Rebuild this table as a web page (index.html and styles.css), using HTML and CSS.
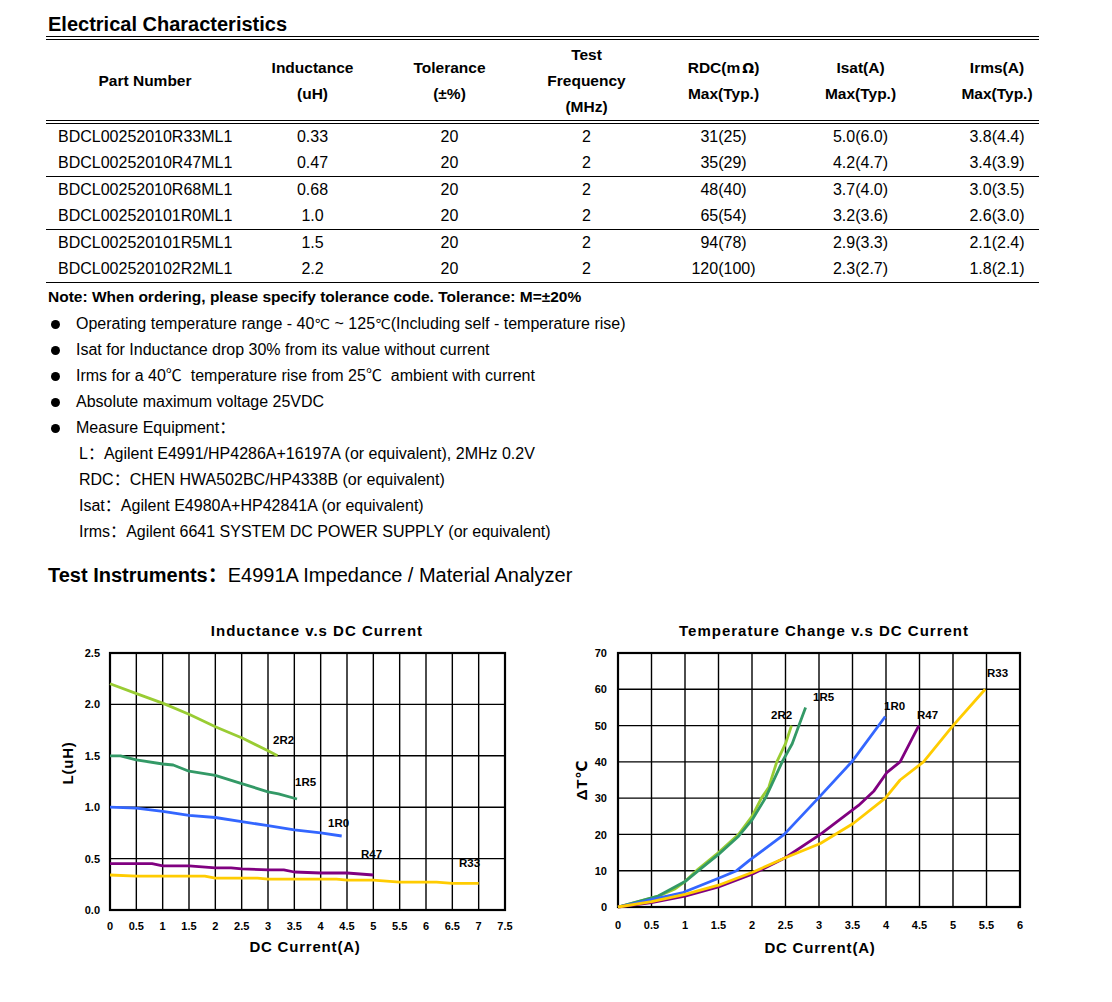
FILE: index.html
```html
<!DOCTYPE html>
<html>
<head>
<meta charset="utf-8">
<link rel="stylesheet" href="styles.css">
</head>
<body>
<div class="page">
  <h1 class="title">Electrical Characteristics</h1>
  <table class="spec">
    <colgroup>
      <col class="c-part"><col class="c-mid"><col class="c-mid"><col class="c-mid"><col class="c-mid"><col class="c-mid"><col class="c-last">
    </colgroup>
    <thead>
      <tr>
        <th>Part Number</th>
        <th>Inductance<br>(uH)</th>
        <th>Tolerance<br>(±%)</th>
        <th>Test<br>Frequency<br>(MHz)</th>
        <th>RDC(m<span class="omega">Ω</span>)<br>Max(Typ.)</th>
        <th>Isat(A)<br>Max(Typ.)</th>
        <th class="last">Irms(A)<br>Max(Typ.)</th>
      </tr>
    </thead>
    <tbody>
      <tr><td class="pn">BDCL00252010R33ML1</td><td>0.33</td><td>20</td><td>2</td><td>31(25)</td><td>5.0(6.0)</td><td class="last">3.8(4.4)</td></tr>
      <tr class="sep"><td class="pn">BDCL00252010R47ML1</td><td>0.47</td><td>20</td><td>2</td><td>35(29)</td><td>4.2(4.7)</td><td class="last">3.4(3.9)</td></tr>
      <tr><td class="pn">BDCL00252010R68ML1</td><td>0.68</td><td>20</td><td>2</td><td>48(40)</td><td>3.7(4.0)</td><td class="last">3.0(3.5)</td></tr>
      <tr class="sep"><td class="pn">BDCL002520101R0ML1</td><td>1.0</td><td>20</td><td>2</td><td>65(54)</td><td>3.2(3.6)</td><td class="last">2.6(3.0)</td></tr>
      <tr><td class="pn">BDCL002520101R5ML1</td><td>1.5</td><td>20</td><td>2</td><td>94(78)</td><td>2.9(3.3)</td><td class="last">2.1(2.4)</td></tr>
      <tr class="sep"><td class="pn">BDCL002520102R2ML1</td><td>2.2</td><td>20</td><td>2</td><td>120(100)</td><td>2.3(2.7)</td><td class="last">1.8(2.1)</td></tr>
    </tbody>
  </table>

  <p class="note">Note: When ordering, please specify tolerance code. Tolerance: M=±20%</p>
  <ul class="bullets">
    <li><span class="dot"></span><span>Operating temperature range - 40<span class="deg">℃</span> ~ 125<span class="deg">℃</span>(Including self - temperature rise)</span></li>
    <li><span class="dot"></span><span>Isat for Inductance drop 30% from its value without current</span></li>
    <li><span class="dot"></span><span>Irms for a 40<span class="cjk">℃</span>&nbsp; temperature rise from 25<span class="cjk">℃</span>&nbsp; ambient with current</span></li>
    <li><span class="dot"></span><span>Absolute maximum voltage 25VDC</span></li>
    <li><span class="dot"></span><span>Measure Equipment<span class="cjk">：</span></span></li>
  </ul>
  <ul class="equip">
    <li>L<span class="cjk">：</span>Agilent E4991/HP4286A+16197A (or equivalent), 2MHz 0.2V</li>
    <li>RDC<span class="cjk">：</span>CHEN HWA502BC/HP4338B (or equivalent)</li>
    <li>Isat<span class="cjk">：</span>Agilent E4980A+HP42841A (or equivalent)</li>
    <li>Irms<span class="cjk">：</span>Agilent 6641 SYSTEM DC POWER SUPPLY (or equivalent)</li>
  </ul>

  <h2 class="instr"><b>Test Instruments<span class="cjk strong">：</span></b>E4991A Impedance / Material Analyzer</h2>

  <div class="charts">
    <svg class="chart-l" width="500" height="345" viewBox="46 615 500 345" xmlns="http://www.w3.org/2000/svg">
      <text class="ctitle" x="317" y="636" text-anchor="middle">Inductance v.s DC Current</text>
      <g class="grid">
        <line x1="136.33" y1="653" x2="136.33" y2="910"/>
        <line x1="162.67" y1="653" x2="162.67" y2="910"/>
        <line x1="189" y1="653" x2="189" y2="910"/>
        <line x1="215.33" y1="653" x2="215.33" y2="910"/>
        <line x1="241.67" y1="653" x2="241.67" y2="910"/>
        <line x1="268" y1="653" x2="268" y2="910"/>
        <line x1="294.33" y1="653" x2="294.33" y2="910"/>
        <line x1="320.67" y1="653" x2="320.67" y2="910"/>
        <line x1="347" y1="653" x2="347" y2="910"/>
        <line x1="373.33" y1="653" x2="373.33" y2="910"/>
        <line x1="399.67" y1="653" x2="399.67" y2="910"/>
        <line x1="426" y1="653" x2="426" y2="910"/>
        <line x1="452.33" y1="653" x2="452.33" y2="910"/>
        <line x1="478.67" y1="653" x2="478.67" y2="910"/>
        <line x1="110" y1="704.4" x2="505" y2="704.4"/>
        <line x1="110" y1="755.8" x2="505" y2="755.8"/>
        <line x1="110" y1="807.2" x2="505" y2="807.2"/>
        <line x1="110" y1="858.6" x2="505" y2="858.6"/>
      </g>
      <rect class="frame" x="110" y="653" width="395" height="257"/>
      <g class="ytick" text-anchor="end">
        <text x="100" y="657">2.5</text>
        <text x="100" y="708">2.0</text>
        <text x="100" y="760">1.5</text>
        <text x="100" y="811">1.0</text>
        <text x="100" y="863">0.5</text>
        <text x="100" y="914">0.0</text>
      </g>
      <g class="xtick" text-anchor="middle">
        <text x="110" y="930">0</text>
        <text x="136.33" y="930">0.5</text>
        <text x="162.67" y="930">1</text>
        <text x="189" y="930">1.5</text>
        <text x="215.33" y="930">2</text>
        <text x="241.67" y="930">2.5</text>
        <text x="268" y="930">3</text>
        <text x="294.33" y="930">3.5</text>
        <text x="320.67" y="930">4</text>
        <text x="347" y="930">4.5</text>
        <text x="373.33" y="930">5</text>
        <text x="399.67" y="930">5.5</text>
        <text x="426" y="930">6</text>
        <text x="452.33" y="930">6.5</text>
        <text x="478.67" y="930">7</text>
        <text x="505" y="930">7.5</text>
      </g>
      <text class="atitle" x="305" y="952" text-anchor="middle">DC Current(A)</text>
      <text class="atitle" x="68" y="768" text-anchor="middle" transform="rotate(-90 68 763)">L(uH)</text>
      <g class="curves">
        <polyline stroke="#99cc33" points="110,683.8 137.9,694.1 163.2,703.4 190.1,714.7 215.9,727 242.7,738.3 268,750.7 277.5,755.8"/>
        <polyline stroke="#339966" points="110,755.8 120.5,755.8 136.3,759.9 162.7,764 173.2,765 189,771.2 215.3,775.3 241.7,783.6 268,791.8 278.5,793.8 297,799"/>
        <polyline stroke="#3366ff" points="110,807.2 136.3,808.2 162.7,811.3 189,815.4 215.3,817.5 241.7,821.6 268,825.7 294.3,829.8 320.7,832.9 341.7,836"/>
        <polyline stroke="#800080" points="110,863.7 152.1,863.7 162.7,865.8 189,865.8 215.3,867.9 231.1,867.9 241.7,868.9 268,869.9 283.8,869.9 294.3,872 320.7,873 347,873 373.3,875"/>
        <polyline stroke="#ffcc00" points="110,875 136.3,876.1 204.8,876.1 215.3,878.1 257.5,878.1 268,879.2 336.5,879.2 347,880.2 373.3,880.2 399.7,882.2 436.5,882.2 452.3,883.3 478.7,883.3"/>
      </g>
      <g class="clabel">
        <text x="273" y="744">2R2</text>
        <text x="295" y="786">1R5</text>
        <text x="328" y="827">1R0</text>
        <text x="361" y="858">R47</text>
        <text x="459" y="867">R33</text>
      </g>
    </svg>

    <svg class="chart-r" width="520" height="345" viewBox="546 615 520 345" xmlns="http://www.w3.org/2000/svg">
      <text class="ctitle" x="824" y="636" text-anchor="middle">Temperature Change v.s DC Current</text>
      <g class="grid">
        <line x1="651.5" y1="653" x2="651.5" y2="907"/>
        <line x1="685" y1="653" x2="685" y2="907"/>
        <line x1="718.5" y1="653" x2="718.5" y2="907"/>
        <line x1="752" y1="653" x2="752" y2="907"/>
        <line x1="785.5" y1="653" x2="785.5" y2="907"/>
        <line x1="819" y1="653" x2="819" y2="907"/>
        <line x1="852.5" y1="653" x2="852.5" y2="907"/>
        <line x1="886" y1="653" x2="886" y2="907"/>
        <line x1="919.5" y1="653" x2="919.5" y2="907"/>
        <line x1="953" y1="653" x2="953" y2="907"/>
        <line x1="986.5" y1="653" x2="986.5" y2="907"/>
        <line x1="618" y1="689.3" x2="1020" y2="689.3"/>
        <line x1="618" y1="725.6" x2="1020" y2="725.6"/>
        <line x1="618" y1="761.9" x2="1020" y2="761.9"/>
        <line x1="618" y1="798.1" x2="1020" y2="798.1"/>
        <line x1="618" y1="834.4" x2="1020" y2="834.4"/>
        <line x1="618" y1="870.7" x2="1020" y2="870.7"/>
      </g>
      <rect class="frame" x="618" y="653" width="402" height="254"/>
      <g class="ytick" text-anchor="end">
        <text x="607" y="657">70</text>
        <text x="607" y="693">60</text>
        <text x="607" y="730">50</text>
        <text x="607" y="766">40</text>
        <text x="607" y="802">30</text>
        <text x="607" y="839">20</text>
        <text x="607" y="875">10</text>
        <text x="607" y="911">0</text>
      </g>
      <g class="xtick" text-anchor="middle">
        <text x="618" y="929">0</text>
        <text x="651.5" y="929">0.5</text>
        <text x="685" y="929">1</text>
        <text x="718.5" y="929">1.5</text>
        <text x="752" y="929">2</text>
        <text x="785.5" y="929">2.5</text>
        <text x="819" y="929">3</text>
        <text x="852.5" y="929">3.5</text>
        <text x="886" y="929">4</text>
        <text x="919.5" y="929">4.5</text>
        <text x="953" y="929">5</text>
        <text x="986.5" y="929">5.5</text>
        <text x="1020" y="929">6</text>
      </g>
      <text class="atitle" x="820" y="953" text-anchor="middle">DC Current(A)</text>
      <text class="atitle" x="582" y="785" text-anchor="middle" transform="rotate(-90 582 780)">ΔT℃</text>
      <g class="curves">
        <polyline stroke="#99cc33" points="618,907 638.1,901.6 658.2,896.1 675,888.9 685,881.6 696.4,870.7 718.5,852.6 738.6,834.4 752,816.3 761.4,798.1 768.8,787.2 776.8,761.8 785.5,743.7 791.5,725.6"/>
        <polyline stroke="#339966" points="618,907 638.1,901.6 658.2,896.1 685,881.6 698.4,870.7 718.5,854.4 738.6,836.2 752,819.9 765.4,798.1 782.2,761.8 792.2,743.7 798.9,725.6 805.6,707.4"/>
        <polyline stroke="#3366ff" points="618,907 651.5,899.7 683,892.5 719.2,878 736.6,870.7 750,859.8 784.2,834.4 818.3,798.1 851.8,761.8 885.3,716.5"/>
        <polyline stroke="#800080" points="618,907 651.5,902.6 685,896.1 718.5,887 752,874.3 784.8,858 820.3,834.4 858.5,805.4 874,790.9 886.7,772.7 900.1,761.8 918.8,725.6"/>
        <polyline stroke="#ffcc00" points="618,907 651.5,901.6 685,894.3 718.5,885.2 752,872.5 784.8,858 820.3,843.5 853.2,823.5 885.3,798.1 900.1,780 923.5,761.8 953,725.6 985.2,689.3"/>
      </g>
      <g class="clabel">
        <text x="987" y="677">R33</text>
        <text x="813" y="701">1R5</text>
        <text x="884" y="710">1R0</text>
        <text x="917" y="719">R47</text>
        <text x="771" y="719">2R2</text>
      </g>
    </svg>
  </div>
</div>
</body>
</html>
```

FILE: styles.css
```css
html, body {
  margin: 0;
  padding: 0;
  background: #ffffff;
}

body {
  font-family: "Liberation Sans", Arial, "Noto Sans CJK SC", sans-serif;
  color: #000;
}

.page {
  padding: 12px 0 0 46px;
  width: 993px;
}

.title {
  margin: 0 0 0 2px;
  font-size: 20px;
  line-height: 24px;
  font-weight: bold;
}

.spec {
  width: 993px;
  border-collapse: separate;
  border-spacing: 0;
  table-layout: fixed;
  font-size: 16px;
}

.c-part { width: 198px; }
.c-mid { width: 137px; }
.c-last { width: 110px; }

.spec th {
  font-size: 15.5px;
  font-weight: bold;
  line-height: 26px;
  padding: 2px 0 0;
  text-align: center;
  vertical-align: middle;
  border-top: 4px double #000;
  border-bottom: 4px double #000;
}

.spec td {
  height: 26px;
  line-height: 26px;
  padding: 0;
  text-align: center;
  white-space: nowrap;
}

.spec td.pn {
  text-align: left;
  padding-left: 12px;
}

.spec .last {
  padding-left: 26px;
}

.spec tr.sep td {
  border-bottom: 1px solid #000;
}

.omega {
  font-family: "DejaVu Sans", sans-serif;
  font-size: 14px;
  padding-left: 2px;
}

.note {
  margin: 1px 0 0 2px;
  height: 26px;
  font-size: 15.5px;
  font-weight: bold;
  line-height: 26px;
}

.bullets, .equip {
  list-style: none;
  margin: 0;
  padding: 0;
  font-size: 16px;
  line-height: 26px;
}

.bullets {
  margin-top: 1px;
}

.bullets li {
  display: flex;
  align-items: center;
  height: 26px;
}

.equip li {
  height: 26px;
  padding-left: 33px;
}

.dot {
  display: inline-block;
  width: 9px;
  height: 9px;
  border-radius: 50%;
  background: #000;
  margin: 0 16px 0 5px;
  flex: none;
}

.deg {
  font-family: "DejaVu Sans", sans-serif;
  font-size: 14px;
  line-height: 1;
}

.cjk {
  font-family: "Noto Sans CJK SC", sans-serif;
  font-weight: normal;
  line-height: 1;
}

.cjk.strong {
  font-weight: bold;
}

.instr {
  margin: 15px 0 0 2px;
  height: 30px;
  font-size: 20px;
  line-height: 30px;
  font-weight: normal;
}

.instr b {
  font-weight: bold;
}

.charts {
  display: flex;
  margin-top: 25px;
}

.charts svg {
  display: block;
  flex: none;
}

.grid line {
  stroke: #000;
  stroke-width: 1.4;
}

.frame {
  fill: none;
  stroke: #000;
  stroke-width: 2.2;
}

.curves polyline {
  fill: none;
  stroke-width: 2.8;
  stroke-linejoin: round;
  stroke-linecap: butt;
}

.ctitle {
  font-family: "Liberation Sans", Arial, sans-serif;
  font-size: 15px;
  font-weight: bold;
  letter-spacing: 1px;
}

.atitle {
  font-family: "Liberation Sans", "DejaVu Sans", sans-serif;
  font-size: 15px;
  font-weight: bold;
  letter-spacing: 0.8px;
}

.ytick text, .xtick text {
  font-family: "Liberation Sans", Arial, sans-serif;
  font-size: 11px;
  font-weight: bold;
}

.clabel text {
  font-family: "Liberation Sans", Arial, sans-serif;
  font-size: 11.5px;
  font-weight: bold;
}
```
